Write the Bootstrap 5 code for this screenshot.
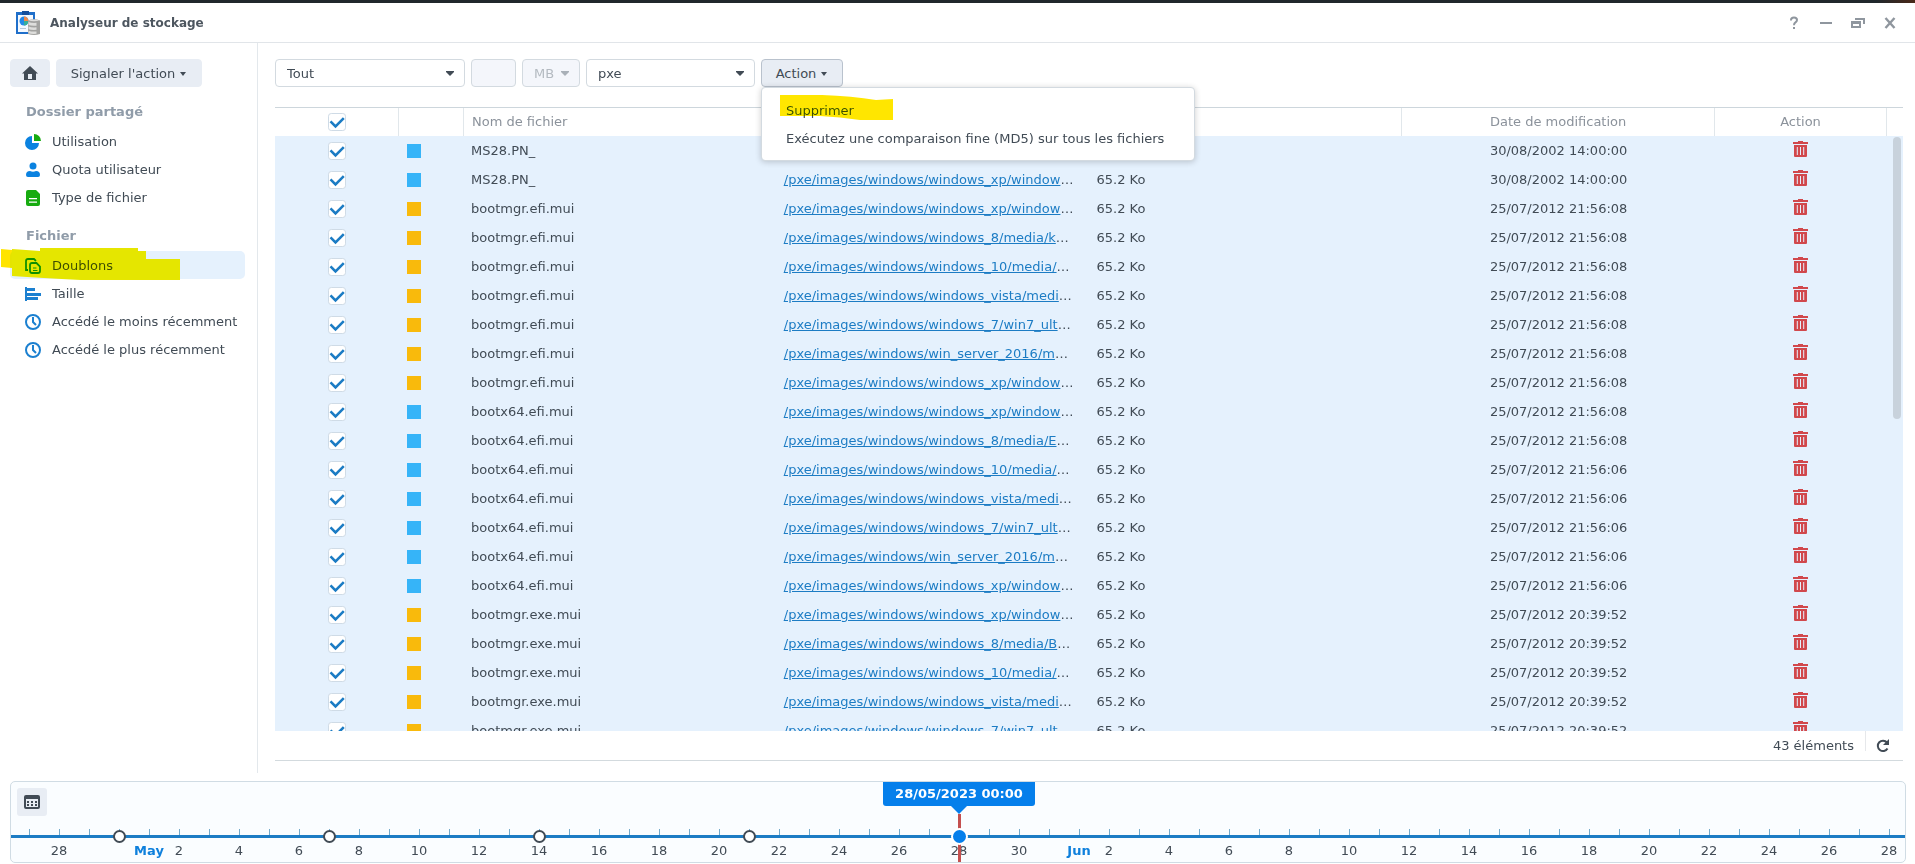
<!DOCTYPE html>
<html lang="fr">
<head>
<meta charset="utf-8">
<meta name="viewport" content="width=device-width, initial-scale=1">
<title>Analyseur de stockage</title>
<link rel="stylesheet" href="https://cdn.jsdelivr.net/npm/bootstrap@5.3.0/dist/css/bootstrap.min.css">
<style>
  :root { --ink:#414b55; --muted-ink:#8b929b; --line:#d5dde3; --blue:#057feb; --deep:#1c7cc4; --row:#e5f1fd; --btn:#e8edf4; }
  body { font-family: Verdana, "DejaVu Sans", sans-serif; font-size: 13px; line-height: 20px; color: var(--ink); height: 100vh; overflow: hidden; }
  svg { display: block; }
  .desk-strip { height: 3px; background: linear-gradient(90deg, #20282c 0 98%, #4a2818); }
  .titlebar { height: 40px; border-bottom: 1px solid #e1e5e9; padding: 0 9px 0 16px; gap: 10px; }
  .titlebar h1 { font-size: 12px; line-height: 20px; color: #4d565f; }
  .win-btn { color: #8f969e; width: 32px; height: 32px; }
  .work { min-height: 0; }
  .side { width: 258px; padding: 16px 12px 0 10px; border-right: 1px solid #e3e8ec; }
  .bar { gap: 6px; }
  .tool { height: 28px; padding: 2px 14px 0 13px; font-size: 13px; line-height: 20px; color: var(--ink); background: var(--btn); border: 1px solid var(--btn); border-radius: 4px; }
  .tool.show { border-color: #b9c2cd !important; background: var(--btn) !important; color: var(--ink) !important; }
  .tool.dropdown-toggle::after { border-width: 4px 3px 0; vertical-align: 2px; margin-left: 5px; }
  .home-btn { width: 40px; padding: 0; } .report-btn { width: 146px; } .action-btn { width: 82px; }
  .side-title { font-size: 13px; line-height: 20px; color: #909ca9; padding-left: 16px; margin: 15px 0 5px; }
  nav + .side-title { margin-top: 15px; }
  .side-link { height: 28px; gap: 11px; padding: 2px 0 0 15px; color: var(--ink); border-radius: 5px; white-space: nowrap; }
  .side-link.active { background: var(--row); }
  .marker { position: absolute; mix-blend-mode: darken; pointer-events: none; }
  .marker-side { left: -9px; top: -3px; }
  .marker-menu { left: 18px; top: 7px; }
  .pane { padding: 16px 12px 12px 17px; min-width: 0; }
  .field { height: 28px; padding: 2px 11px 0; font-size: 13px; line-height: 20px; color: var(--ink); border: 1px solid #d3dae0; border-radius: 4px;
    background: #fff url("data:image/svg+xml,%3Csvg xmlns='http://www.w3.org/2000/svg' viewBox='0 0 8 5'%3E%3Cpath fill='%23414b55' d='M0 0h8v1L4 5 0 1z'/%3E%3C/svg%3E") no-repeat right 10px center / 8px 5px; }
  .field:disabled { color: #b4bac1; background-color: #f4f6fb; opacity: 1; }
  input.field { background-image: none; }
  select.field:disabled { background-image: url("data:image/svg+xml,%3Csvg xmlns='http://www.w3.org/2000/svg' viewBox='0 0 8 5'%3E%3Cpath fill='%23a9b0b8' d='M0 0h8v1L4 5 0 1z'/%3E%3C/svg%3E"); }
  .w-tout { width: 190px; } .w-num { width: 45px; } .w-unit { width: 58px; } .w-share { width: 169px; }
  .action-menu { width: 434px; padding: 8px 0; border: 1px solid #d3dae0; border-radius: 4px; box-shadow: 0 1px 6px #0003; font-size: 13px; margin: 0; }
  .action-menu .dropdown-item { line-height: 20px; padding: 5px 24px 3px; color: var(--ink); }
  .list-box { margin-top: 20px; border-top: 1px solid #cdd6dc; min-height: 0; }
  .files { table-layout: fixed; width: 100%; border-collapse: separate; border-spacing: 0; }
  .files th { height: 28px; font-weight: 400; color: var(--muted-ink); padding: 0 8px; border-right: 1px solid #e1e7eb; line-height: 20px; }
  .files th:last-child { border-right: 0; }
  .files td { height: 29px; padding: 0 8px; background: var(--row); white-space: nowrap; line-height: 20px; vertical-align: middle; }
  .files td.txt { padding: 1px 7px 0; }
  .files td.del { padding-bottom: 3px; }
  .files a { color: var(--deep); }
  .c-check { width: 124px; } .c-group { width: 65px; } .c-act { width: 172px; } .c-end { width: 16px; }
  .tick { width: 18px; height: 18px; margin: 0; display: block; border: 1px solid #cfdbe6; border-radius: 3px; background-color: #fff; margin-inline: auto; }
  .tick:checked { border-color: #cfdbe6; background-color: #fff;
    background-image: url("data:image/svg+xml,%3Csvg xmlns='http://www.w3.org/2000/svg' viewBox='0 0 16 16'%3E%3Cpath fill='none' stroke='%231c7cc4' stroke-width='2.6' d='M1.500 7.400l5 5L14.800 4.200'/%3E%3C/svg%3E"); background-size: 16px 16px; }
  .swatch { width: 14px; height: 14px; }
  .sw-b { background: #36b4f8; } .sw-y { background: #f9ba0c; }
  .trash { color: #d1484c; }
  .thumb { position: absolute; right: 2px; top: 29px; width: 8px; height: 282px; border-radius: 4px; background: #c8d2dc; }
  .foot { height: 30px; border-bottom: 1px solid #d3dade; padding-right: 13px; }
  .foot .vr { height: 20px; color: #9aa5b0; margin: 0 10px 0 11px; }
  .refresh { color: var(--ink); }
  .timeline { margin: 8px 9px 1px 10px; height: 82px; border: 1px solid #d0dce4; border-radius: 5px; background: #fafdff; }
  .cal { position: absolute; left: 6px; top: 6px; width: 30px; height: 28px; border-radius: 3px; background: var(--btn); color: var(--ink); }
  .scale { padding: 47px 1px 0 3px; height: 100%; }
  .axis { position: absolute; left: 0; right: 0; top: 53px; height: 3px; background: var(--deep); }
  .day { flex: 1 1 0; min-width: 0; position: relative; display: flex; flex-direction: column; align-items: center; }
  .day::before { content: ""; width: 1px; height: 6px; background: #72aacb; flex: none; }
  .day span { margin-top: 6px; white-space: nowrap; }
  .day .month { color: #0f80dc; font-weight: 700; }
  .day.stop::after { content: ""; position: absolute; top: 1px; width: 13px; height: 13px; border: 2px solid #414b55; border-radius: 50%; background: #fff; }
  .day.now::after { content: ""; position: absolute; top: -1px; width: 17px; height: 17px; border: 2px solid #fff; border-radius: 50%; background: var(--blue); }
  .needle { position: absolute; top: -15px; height: 48px; width: 3px; background: #c4504f; }
  .flag { position: absolute; top: -47px; width: 152px; height: 24px; line-height: 24px; border-radius: 0 0 3px 3px; background: var(--blue); color: #fff; text-align: center; font-weight: 700; }
  .flag::after { content: ""; position: absolute; top: 24px; left: 68px; border: 8px solid transparent; border-top-color: var(--blue); border-bottom: 0; }
</style>
</head>
<body class="d-flex flex-column bg-white">
<div class="desk-strip flex-shrink-0"></div>
<header class="titlebar d-flex align-items-center flex-shrink-0">
  <svg width="24" height="24" viewBox="0 0 24 24"><path fill="#1f6fca" d="M0 1h19v22H0z"/><path fill="#f4f9ff" d="M2 4h15v17H2z"/><path fill="#164f9c" d="M6 0h7v4H6z"/><circle cx="8" cy="10" r="4.500" fill="#2389e8"/><path fill="#f08a4b" d="M8 10V5.500A4.500 4.500 0 0 1 12.500 10z"/><path fill="#35b09a" d="M8 10h4.500A4.500 4.500 0 0 1 8 14.500z"/><path stroke="#b7c8da" d="M4 17.500h6"/><path fill="#a3a3a1" d="M12 9.500q6-2.500 12 0V23q-6 2-12 0z"/><path fill="#dededc" d="M12.500 9.500q5.500-2 11 0-5.500 1.500-11 0M12.500 11q3 1.200 8 .800v2.900q-5 .400-8-.600zM12.500 15.500q3 1.200 8 .800v2.500q-5 .400-8-.600zM12.500 19.700q3 1.200 8 .800v2.300q-5 .400-8-.500z"/></svg>
  <h1 class="fw-bold mb-0 me-auto">Analyseur de stockage</h1>
  <div class="d-flex">
    <button class="btn p-0 border-0 win-btn d-flex align-items-center justify-content-center" aria-label="Aide"><svg width="12" height="14" viewBox="0 0 12 14"><path fill="none" stroke="currentColor" stroke-width="2" d="M3 4.500V4q0-2.500 3-2.500T9 4q0 1.300-1.500 2.300T6 9.200"/><path fill="currentColor" d="M5 11h2v2H5z"/></svg></button>
    <button class="btn p-0 border-0 win-btn d-flex align-items-center justify-content-center" aria-label="Réduire"><svg width="12" height="12"><path fill="currentColor" d="M0 5h12v2H0z"/></svg></button>
    <button class="btn p-0 border-0 win-btn d-flex align-items-center justify-content-center" aria-label="Restaurer"><svg width="14" height="12" viewBox="0 0 14 12"><path fill="currentColor" fill-rule="evenodd" d="M4 1h10v6h-2V3H4zM0 4h10v7H0zm2 3v2h6V7z"/></svg></button>
    <button class="btn p-0 border-0 win-btn d-flex align-items-center justify-content-center" aria-label="Fermer"><svg width="12" height="12" viewBox="0 0 12 12"><path stroke="currentColor" stroke-width="2.400" d="M1.500 1l9 10m0-10l-9 10"/></svg></button>
  </div>
</header>

<div class="work d-flex flex-grow-1">
  <aside class="side flex-shrink-0">
    <div class="bar d-flex">
      <button class="btn tool home-btn d-flex justify-content-center align-items-center" aria-label="Accueil"><svg width="16" height="14" viewBox="0 0 16 14"><path fill="currentColor" fill-rule="evenodd" d="M8 0l8 7.500h-2V14H2V7.500H0zM6 8v5h4V8z"/></svg></button>
      <button class="btn tool report-btn dropdown-toggle">Signaler l'action</button>
    </div>
    <h2 class="side-title fw-bold">Dossier partagé</h2>
    <nav>
      <a href="#" class="side-link d-flex align-items-center text-decoration-none"><svg width="16" height="16" viewBox="0 0 16 16"><path fill="#0b82e0" d="M7 2v7h7a7 7 0 1 1-7-7z"/><path fill="#17ab10" d="M9 0a7 7 0 0 1 7 7H9z"/></svg>Utilisation</a>
      <a href="#" class="side-link d-flex align-items-center text-decoration-none"><svg width="16" height="16" viewBox="0 0 16 16"><circle cx="8" cy="4" r="3.500" fill="#0b82e0"/><path fill="#0b82e0" d="M1 13q0-4 4-4 3 1.500 6 0 4 0 4 4 0 2-2 2H3q-2 0-2-2z"/></svg>Quota utilisateur</a>
      <a href="#" class="side-link d-flex align-items-center text-decoration-none"><svg width="16" height="16" viewBox="0 0 16 16"><path fill="#17ab10" fill-rule="evenodd" d="M3 0h8l4 4v10q0 2-2 2H3q-2 0-2-2V2q0-2 2-2zm1 8v1.300h8V8zm0 3.500v1.300h8v-1.300z"/></svg>Type de fichier</a>
    </nav>
    <h2 class="side-title fw-bold">Fichier</h2>
    <nav class="position-relative">
      <a href="#" class="side-link active d-flex align-items-center text-decoration-none"><svg width="16" height="16" viewBox="0 0 16 16" fill="none" stroke="#0f8f2a" stroke-width="1.800"><path d="M3 12H1V3q0-2 2-2h6l2 2"/><path d="M5 7q0-2 2-2h4.500L15 8.500V13q0 2-2 2H7q-2 0-2-2z"/><path stroke-width="1" d="M8 10h3.500M8 12.500h4.500"/></svg>Doublons</a>
      <a href="#" class="side-link d-flex align-items-center text-decoration-none"><svg width="16" height="16" viewBox="0 0 16 16"><path fill="#1c80d0" d="M0 1h2v14H0zM2 2h8v3H2zM2 7h14v3H2zM2 11h11v3H2z"/></svg>Taille</a>
      <a href="#" class="side-link d-flex align-items-center text-decoration-none"><svg width="16" height="16" viewBox="0 0 16 16" fill="none" stroke="#1c80d0" stroke-width="2"><circle cx="8" cy="8" r="7"/><path d="M8 3v5l3 3"/></svg>Accédé le moins récemment</a>
      <a href="#" class="side-link d-flex align-items-center text-decoration-none"><svg width="16" height="16" viewBox="0 0 16 16" fill="none" stroke="#1c80d0" stroke-width="2"><circle cx="8" cy="8" r="7"/><path d="M8 3v5l3 3"/></svg>Accédé le plus récemment</a>
      <svg class="marker marker-side" width="180" height="33" viewBox="0 0 180 33"><path fill="#ffe400" d="M0 1l11 1v18l-11-1z"/><path fill="#e6e600" d="M11 1q14 1 28 2V0h98v3h8v8h34v21H80Q40 30 11 28z"/></svg>
    </nav>
  </aside>

  <main class="pane flex-grow-1 d-flex flex-column">
    <div class="bar d-flex flex-shrink-0">
      <select class="form-select field w-tout" aria-label="Filtre"><option>Tout</option></select>
      <input class="form-control field w-num" type="text" aria-label="Valeur" disabled>
      <select class="form-select field w-unit" aria-label="Unité" disabled><option>MB</option></select>
      <select class="form-select field w-share" aria-label="Dossier"><option>pxe</option></select>
      <div class="dropdown">
        <button class="btn tool action-btn dropdown-toggle show" aria-expanded="true">Action</button>
        <ul class="dropdown-menu action-menu show">
          <li><button class="dropdown-item">Supprimer</button></li>
          <li><button class="dropdown-item">Exécutez une comparaison fine (MD5) sur tous les fichiers</button></li>
          <li aria-hidden="true"><svg class="marker marker-menu" width="113" height="26" viewBox="0 0 113 26"><path fill="#ffe600" d="M0 0h42q30 1 54 5l17-1v21H80Q60 22 40 21H0z"/></svg></li>
        </ul>
      </div>
    </div>

    <div class="list-box flex-grow-1 overflow-hidden position-relative">
      <table class="files">
        <colgroup><col class="c-check"><col class="c-group"><col><col><col><col><col class="c-act"><col class="c-end"></colgroup>
        <thead><tr>
          <th><input class="form-check-input tick" type="checkbox" checked aria-label="Tout sélectionner"></th>
          <th></th><th>Nom de fichier</th><th></th><th></th>
          <th class="text-center">Date de modification</th><th class="text-center">Action</th><th></th>
        </tr></thead>
        <tbody id="rows"></tbody>
      </table>
      <div class="thumb"></div>
    </div>
    <div class="foot d-flex align-items-center justify-content-end flex-shrink-0">
      <span>43 éléments</span><span class="vr"></span>
      <button class="btn p-0 border-0 refresh" aria-label="Actualiser"><svg width="14" height="14" viewBox="0 0 14 14"><path fill="none" stroke="currentColor" stroke-width="2" d="M11.500 9.500A5.200 5.200 0 1 1 11 3.500"/><path fill="currentColor" d="M13 0v6H7z"/></svg></button>
    </div>
  </main>
</div>

<section class="timeline position-relative flex-shrink-0" aria-label="Chronologie">
  <div class="axis"></div>
  <div class="scale d-flex" id="scale"></div>
  <button class="btn cal p-0 border-0 d-flex align-items-center justify-content-center" aria-label="Calendrier"><svg width="16" height="16" viewBox="0 0 16 16"><path fill="currentColor" fill-rule="evenodd" d="M2 1h12q2 0 2 2v10q0 2-2 2H2q-2 0-2-2V3q0-2 2-2zM2 5v8h12V5z"/><path fill="currentColor" d="M3 7h2v2H3zM7 7h2v2H7zM11 7h2v2h-2zM3 10h2v2H3zM7 10h2v2H7zM11 10h2v2h-2z"/></svg></button>
</section>

<script src="https://cdn.jsdelivr.net/npm/bootstrap@5.3.0/dist/js/bootstrap.bundle.min.js"></script>
<script>
  const W = '/pxe/images/windows/';
  const early = '25/07/2012 21:56:08', mid = '25/07/2012 21:56:06', late = '25/07/2012 20:39:52', old = '30/08/2002 14:00:00';
  const xp = 'windows_xp/window', w10 = 'windows_10/media/', vista = 'windows_vista/medi', w7 = 'windows_7/win7_ult', srv = 'win_server_2016/m';
  const files = [
    ['b', 'MS28.PN_', '', old], ['b', 'MS28.PN_', xp, old],
    ...[xp, 'windows_8/media/k', w10, vista, w7, srv, xp].map(p => ['y', 'bootmgr.efi.mui', p, early]),
    ...[xp, 'windows_8/media/E'].map(p => ['b', 'bootx64.efi.mui', p, early]),
    ...[w10, vista, w7, srv, xp].map(p => ['b', 'bootx64.efi.mui', p, mid]),
    ...[xp, 'windows_8/media/B', w10, vista, w7].map(p => ['y', 'bootmgr.exe.mui', p, late])
  ];
  const trash = '<svg width="16" height="17" viewBox="0 0 16 17"><path fill="currentColor" fill-rule="evenodd" d="M5 0h5v1h5v2H0V1h5zM1 4h13v11q0 1-1 1H2q-1 0-1-1zm2.800 2v8h1V6zm3.200 0v8h1V6zm3.200 0v8h1V6z"/></svg>';
  document.getElementById('rows').innerHTML = files.map(([c, n, p, d]) => `<tr>
    <td><input class="form-check-input tick" type="checkbox" checked aria-label="${n}"></td>
    <td><div class="swatch sw-${c}"></div></td><td class="txt">${n}</td>
    <td class="txt">${p ? `<a href="#">${W}${p}</a>…` : ''}</td><td class="txt">${p ? '65.2 Ko' : ''}</td>
    <td class="txt text-center">${d}</td>
    <td class="del"><button class="btn p-0 border-0 trash d-block mx-auto" aria-label="Supprimer ${n}">${trash}</button></td><td></td></tr>`).join('');

  // one cell per day, from 27 April to 28 June
  const days = [];
  for (let i = 0; i < 63; i++) {
    const t = new Date(2023, 3, 27 + i), n = t.getDate(), m = t.getMonth();
    const stop = i < 31 && i % 7 === 3, now = n === 28 && m === 4;
    let label = n % 2 === 0 && n !== 30 || (n === 30 && m === 4) ? n : '';
    if (n === 1) label = `<b class="month">${m === 4 ? 'May' : 'Jun'}</b>`;
    days.push(`<div class="day${now ? ' now' : stop ? ' stop' : ''}">${label ? `<span>${label}</span>` : ''}${now ? '<i class="needle"></i><div class="flag">28/05/2023 00:00</div>' : ''}</div>`);
  }
  document.getElementById('scale').innerHTML = days.join('');
</script>
</body>
</html>
